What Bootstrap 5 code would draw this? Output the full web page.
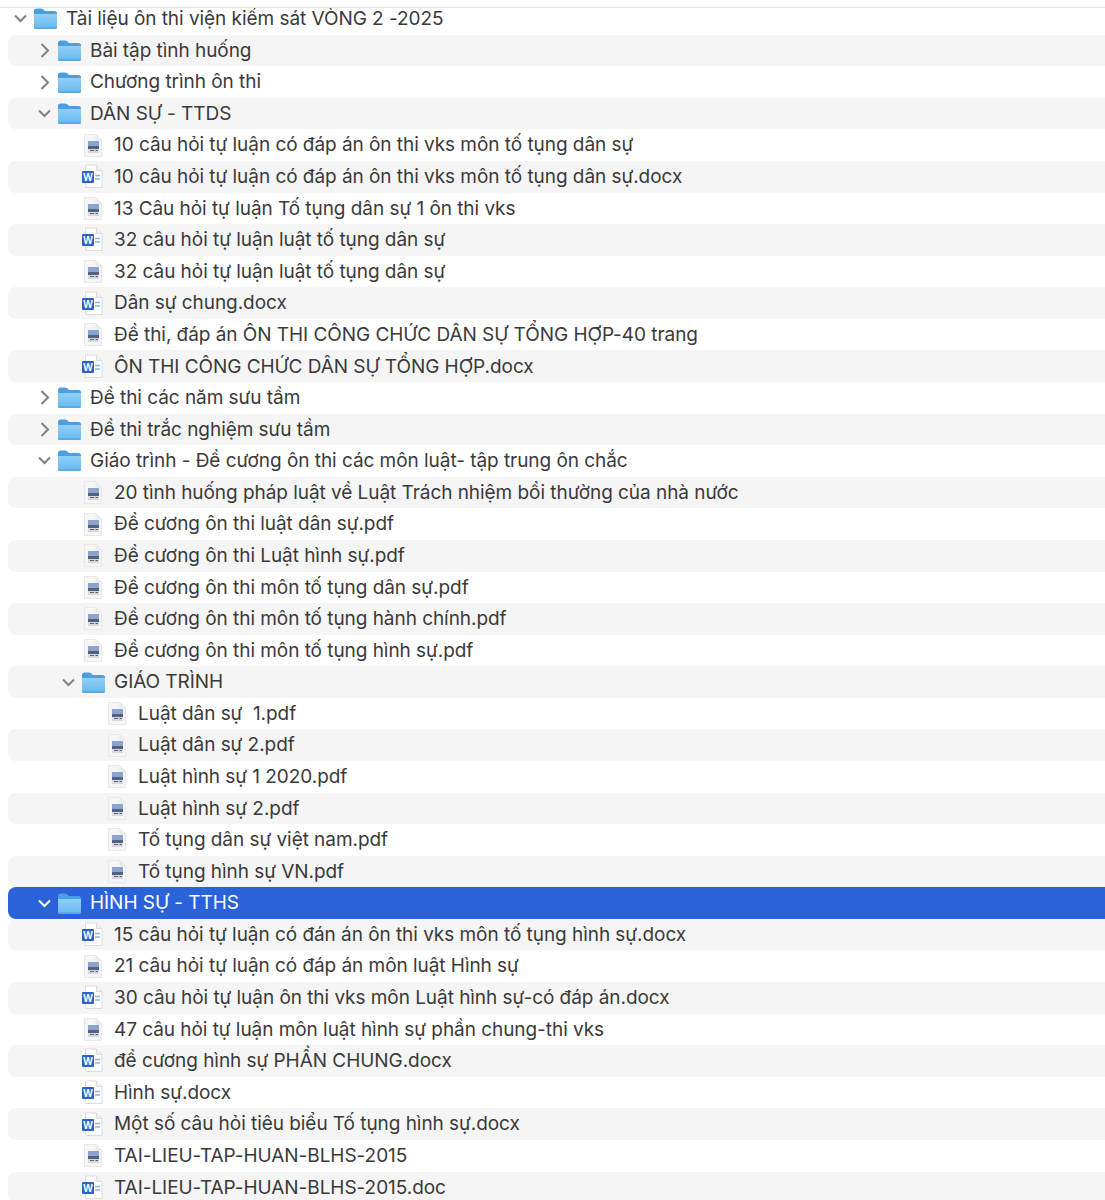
<!DOCTYPE html>
<html><head><meta charset="utf-8">
<link href="https://cdn.jsdelivr.net/npm/bootstrap@5.3.0/dist/css/bootstrap.min.css" rel="stylesheet">
<style>
html,body{background:#fff;margin:0;overflow:hidden}
.tree{margin-top:7px;height:1193px;overflow:hidden;border-top:1px solid #e2e2e2;font-family:Inter,"Noto Sans",sans-serif;font-size:19px;color:#3a3a3a;letter-spacing:-.05px}
.rw{height:31.58px;margin-left:8px;border-radius:8px 0 0 8px;white-space:nowrap}
.rw span{padding-top:1px}
.rw:first-child{height:26.7px;padding-bottom:6px}
.rw:nth-child(even){background:#f5f5f5}
.rw.sel{background:#2a62d9;color:#fff}
.chev{width:13px;height:15px;flex:none;margin-right:6px}
.fold{width:25px;height:23px;flex:none;margin-right:8px}
.fi{width:24px;height:25px;flex:none;margin-right:9px}
</style></head><body>
<svg width="0" height="0" class="d-block"><defs>
<linearGradient id="gb" x1="0" y1="0" x2="0" y2="1"><stop offset="0" stop-color="#8fd0f8"/><stop offset="1" stop-color="#68b8ee"/></linearGradient>
<g id="f"><path d="M1 4Q1 1.500 3.500 1.500H8Q10 1.500 11 3L12 4H21.500Q24 4 24 6.500V19.500Q24 22 21.500 22H3.500Q1 22 1 19.500Z" fill="#4a9fe0"/><path d="M1 7H24V19.500Q24 22 21.500 22H3.500Q1 22 1 19.500Z" fill="url(#gb)"/><path d="M1.500 21H23.500" stroke="#4c9bd8" stroke-width="1"/></g>
<g id="p"><path d="M3.500 1.500H15L20.500 7V23.500H3.500Z" fill="#f6f6f6" stroke="#e8e8e8"/><path d="M15 1.500V7H20.500" fill="#ececec" stroke="#e8e8e8"/><path d="M7 8H18V13H7Z" fill="#8aa3cf"/><path d="M7 13H18V16H7Z" fill="#55617a"/><path d="M7 16H18V20H7Z" fill="#d5d8dd"/><path d="M9 17.500H13M14.500 17.500H17" stroke="#5a6477" stroke-width="1.200"/></g>
<g id="w"><path d="M4.500 1H15.500L21 6.500V23.500H4.500Z" fill="#fff" stroke="#dcdcdc"/><path d="M15.500 1V6.500H21" fill="#f0f0f0" stroke="#dcdcdc"/><path d="M14 11.500H19M14 15H19" stroke="#8fb2e6" stroke-width="1.500"/><rect x="1" y="7" width="12" height="12" rx="1" fill="#2f62c4"/><text x="7" y="16.500" text-anchor="middle" font-size="10" font-weight="700" fill="#fff" font-family="Liberation Sans">W</text></g>
</defs></svg>
<div class="tree" id="t"></div>
<script>
const D=[[0,'o','Tài liệu ôn thi viện kiểm sát VÒNG 2 -2025'],[1,'c','Bài tập tình huống'],[1,'c','Chương trình ôn thi'],[1,'o','DÂN SỰ - TTDS'],
[2,'p','10 câu hỏi tự luận có đáp án ôn thi vks môn tố tụng dân sự'],[2,'w','10 câu hỏi tự luận có đáp án ôn thi vks môn tố tụng dân sự.docx'],[2,'p','13 Câu hỏi tự luận Tố tụng dân sự 1 ôn thi vks'],[2,'w','32 câu hỏi tự luận luật tố tụng dân sự'],[2,'p','32 câu hỏi tự luận luật tố tụng dân sự'],[2,'w','Dân sự chung.docx'],[2,'p','Đề thi, đáp án ÔN THI CÔNG CHỨC DÂN SỰ TỔNG HỢP-40 trang'],[2,'w','ÔN THI CÔNG CHỨC DÂN SỰ TỔNG HỢP.docx'],
[1,'c','Đề thi các năm sưu tầm'],[1,'c','Đề thi trắc nghiệm sưu tầm'],[1,'o','Giáo trình - Đề cương ôn thi các môn luật- tập trung ôn chắc'],
[2,'p','20 tình huống pháp luật về Luật Trách nhiệm bồi thường của nhà nước'],[2,'p','Đề cương ôn thi luật dân sự.pdf'],[2,'p','Đề cương ôn thi Luật hình sự.pdf'],[2,'p','Đề cương ôn thi môn tố tụng dân sự.pdf'],[2,'p','Đề cương ôn thi môn tố tụng hành chính.pdf'],[2,'p','Đề cương ôn thi môn tố tụng hình sự.pdf'],
[2,'o','GIÁO TRÌNH'],[3,'p','Luật dân sự  1.pdf'],[3,'p','Luật dân sự 2.pdf'],[3,'p','Luật hình sự 1 2020.pdf'],[3,'p','Luật hình sự 2.pdf'],[3,'p','Tố tụng dân sự việt nam.pdf'],[3,'p','Tố tụng hình sự VN.pdf'],
[1,'s','HÌNH SỰ - TTHS'],[2,'w','15 câu hỏi tự luận có đán án ôn thi vks môn tố tụng hình sự.docx'],[2,'p','21 câu hỏi tự luận có đáp án môn luật Hình sự'],[2,'w','30 câu hỏi tự luận ôn thi vks môn Luật hình sự-có đáp án.docx'],[2,'p','47 câu hỏi tự luận môn luật hình sự phần chung-thi vks'],[2,'w','đề cương hình sự PHẦN CHUNG.docx'],[2,'w','Hình sự.docx'],[2,'w','Một số câu hỏi tiêu biểu Tố tụng hình sự.docx'],[2,'p','TAI-LIEU-TAP-HUAN-BLHS-2015'],[2,'w','TAI-LIEU-TAP-HUAN-BLHS-2015.doc']];
const esc=s=>s.replace(/  /g,' &nbsp;');
const fp=[6,30,54],ip={2:73,3:97};
document.getElementById('t').innerHTML=D.map(([l,k,s])=>{
 const open=k=='o'||k=='s',fold=open||k=='c';
 const col=k=='s'?'#fff':'#808080';
 const ch=open?'M1 4.500L6.500 10L12 4.500':'M3.500 1L10 7.500L3.500 14';
 const ic=fold?`<svg class="chev" viewBox="0 0 13 15"><path d="${ch}" fill="none" stroke="${col}" stroke-width="2"/></svg><svg class="fold" viewBox="0 0 25 23"><use href="#f"/></svg>`:`<svg class="fi" viewBox="0 0 24 25"><use href="#${k}"/></svg>`;
 return `<div class="rw d-flex align-items-center ${k=='s'?'sel':''}" style="padding-left:${fold?fp[l]:ip[l]}px">${ic}<span>${esc(s)}</span></div>`;
}).join('');
</script>
<script src="https://cdn.jsdelivr.net/npm/bootstrap@5.3.0/dist/js/bootstrap.bundle.min.js"></script>
</body></html>
